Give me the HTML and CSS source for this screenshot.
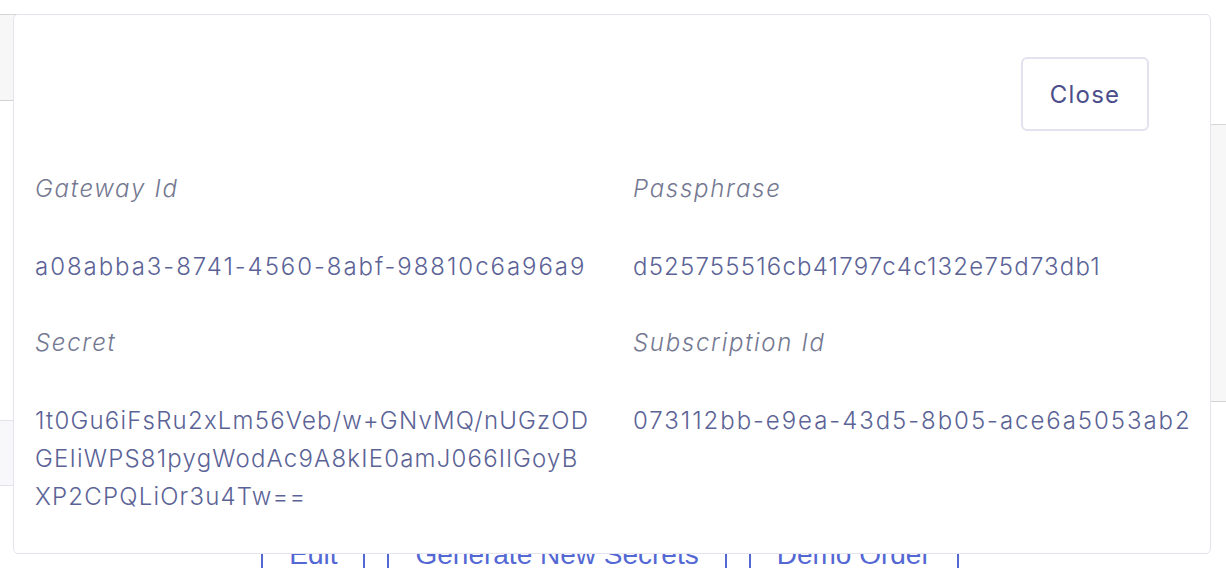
FILE: index.html
```html
<!DOCTYPE html>
<html lang="en">
<head>
<meta charset="utf-8">
<title>Gateway credentials</title>
<link rel="stylesheet" href="styles.css">
</head>
<body>
  <div class="page">
    <div class="band band-top"></div>
    <div class="band band-right"></div>
    <div class="band band-bottom"></div>
    <nav class="actions">
      <a class="action" href="#">Edit</a>
      <a class="action" href="#">Generate New Secrets</a>
      <a class="action" href="#">Demo Order</a>
    </nav>
  </div>

  <div class="modal">
    <div class="modal-head">
      <button class="btn-close" type="button">Close</button>
    </div>
    <div class="fields">
      <div class="field">
        <div class="label">Gateway Id</div>
        <div class="value value-uuid">a08abba3-8741-4560-8abf-98810c6a96a9</div>
      </div>
      <div class="field">
        <div class="label">Passphrase</div>
        <div class="value">d525755516cb41797c4c132e75d73db1</div>
      </div>
      <div class="field">
        <div class="label">Secret</div>
        <div class="value">
          <span class="line">1t0Gu6iFsRu2xLm56Veb/w+GNvMQ/nUGzOD</span>
          <span class="line">GEIiWPS81pygWodAc9A8kIE0amJ066IlGoyB</span>
          <span class="line">XP2CPQLiOr3u4Tw==</span>
        </div>
      </div>
      <div class="field">
        <div class="label">Subscription Id</div>
        <div class="value value-uuid">073112bb-e9ea-43d5-8b05-ace6a5053ab2</div>
      </div>
    </div>
  </div>
</body>
</html>
```

FILE: styles.css
```css
* { box-sizing: border-box; }

html, body {
  margin: 0;
  padding: 0;
  background: #ffffff;
  overflow: hidden;
}

body {
  width: 1226px;
  height: 568px;
  font-family: Inter, "Open Sans", "DejaVu Sans", sans-serif;
}

/* background page (mostly hidden behind the dialog) */
.page {
  display: flex;
  flex-direction: column;
}

.band {
  width: 50%;
  background: #f7f7f7;
  border-top: 1px solid #d6d6d6;
  border-bottom: 1px solid #d2d2d2;
}

.band-top {
  margin-top: 14px;
  height: 87px;
}

.band-right {
  margin-top: 23px;
  margin-left: auto;
  height: 278px;
}

.band-bottom {
  margin-top: 18px;
  height: 66px;
  background: #f8f8fb;
  border-top-color: #e2e2ea;
  border-bottom-color: #e2e2ea;
}

.actions {
  margin-top: 52px;
  padding-right: 6px;
  display: flex;
  justify-content: center;
  font-family: "Liberation Sans", Arial, sans-serif;
  font-size: 28px;
  line-height: 34px;
}

.action {
  color: #5468d4;
  text-decoration: none;
  padding: 0 26px;
  margin: 0 11px;
  border-left: 2px solid #5468d4;
  border-right: 2px solid #5468d4;
}

/* dialog */
.modal {
  position: fixed;
  top: 14px;
  left: 13px;
  width: 1198px;
  height: 540px;
  background: #ffffff;
  border: 1px solid #e4e3ee;
  border-radius: 5px;
  padding: 42px 20px 0 21px;
  z-index: 10;
}

.modal-head {
  display: flex;
  justify-content: flex-end;
}

.btn-close {
  width: 128px;
  height: 74px;
  margin-right: 41px;
  background: #ffffff;
  border: 2px solid #e3e2f0;
  border-radius: 6px;
  font-family: inherit;
  font-size: 24px;
  font-weight: 400;
  letter-spacing: 1.2px;
  color: #4b4e8a;
  cursor: pointer;
}

.fields {
  margin-top: 39px;
  display: grid;
  grid-template-columns: 1fr 1fr;
  column-gap: 41px;
}

.field {
  display: flex;
  flex-direction: column;
  min-width: 0;
}

.label {
  font-size: 24px;
  line-height: 38px;
  font-style: italic;
  font-weight: 300;
  letter-spacing: 1.7px;
  color: #747891;
  margin-bottom: 40px;
}

.value {
  font-size: 24px;
  line-height: 38px;
  font-weight: 300;
  letter-spacing: 1.2px;
  color: #5b6396;
  margin-bottom: 38px;
}

.value-uuid {
  letter-spacing: 1.95px;
  white-space: nowrap;
}

.line {
  display: block;
}
```
